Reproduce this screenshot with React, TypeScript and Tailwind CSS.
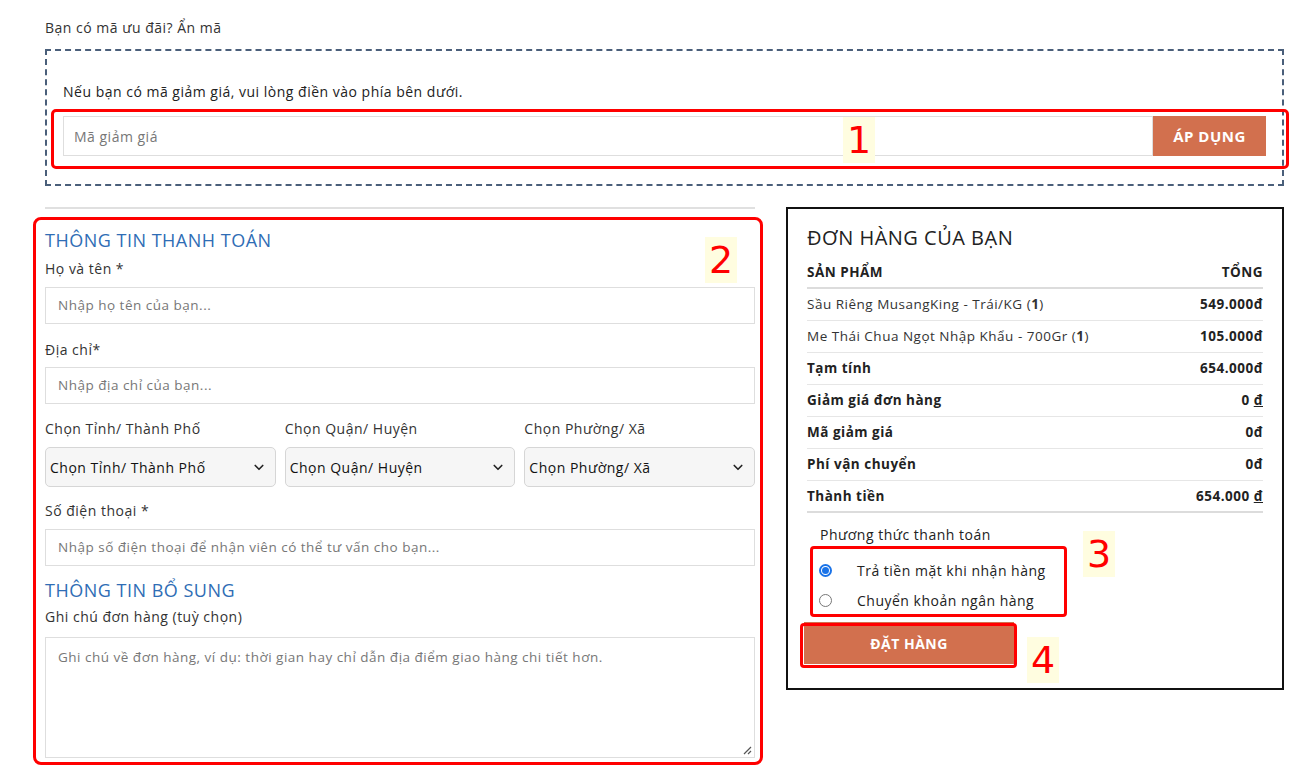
import React from "react";

const font = { fontFamily: '"Open Sans", "Noto Sans", sans-serif', letterSpacing: "0.5px" };

function Chevron() {
  return (
    <svg width="12" height="12" viewBox="0 0 16 16" className="shrink-0">
      <path d="M3 6l5 5 5-5" fill="none" stroke="#222" strokeWidth="2.2" strokeLinecap="round" strokeLinejoin="round" />
    </svg>
  );
}

function Select({ label }: { label: string }) {
  return (
    <div className="flex flex-col">
      <div className="text-[14px] text-[#333] h-[20px] leading-[20px]">{label}</div>
      <div className="mt-[8px] h-[40px] rounded-[5px] border border-[#d6d6d6] bg-[#f6f6f6] flex items-center justify-between pl-[4px] pr-[10px] text-[14px] text-[#111]">
        <span>{label}</span>
        <Chevron />
      </div>
    </div>
  );
}

function Input({ placeholder }: { placeholder: string }) {
  return (
    <div className="h-[37px] border border-[#dedede] flex items-center px-[12px] text-[13.5px] text-[#777]">{placeholder}</div>
  );
}

function Num({ n, cls }: { n: string; cls: string }) {
  return (
    <div className={"absolute bg-[#fffde0] text-[#ff0000] text-[38px] leading-[46px] px-[4px] " + cls} style={{ fontFamily: '"DejaVu Sans", sans-serif', letterSpacing: 0 }}>
      {n}
    </div>
  );
}

function Row({ l, r, bold }: { l: React.ReactNode; r: React.ReactNode; bold?: boolean }) {
  return (
    <div className="h-[32px] flex items-center justify-between border-b border-[#e6e6e6] text-[13.5px]">
      <span className={bold ? "font-bold text-[#222]" : "text-[#333]"}>{l}</span>
      <span className="font-bold text-[#222]">{r}</span>
    </div>
  );
}

export default function App() {
  return (
    <div className="w-[1299px] h-[776px] bg-white relative overflow-hidden text-[#333]" style={font}>
      <div className="pl-[45px] pr-[15px] pt-[18px]">
        <div className="text-[14px] leading-[20px] text-[#333]">Bạn có mã ưu đãi? Ẩn mã</div>
        {/* coupon dashed box */}
        <div className="mt-[11px] border-2 border-dashed border-[#4a5f7a] h-[137px] px-[16px] pt-[31px] relative">
          <div className="text-[14px] leading-[20px] text-[#222]">Nếu bạn có mã giảm giá, vui lòng điền vào phía bên dưới.</div>
          <div className="mt-[14px] flex h-[40px]">
            <div className="flex-1 border border-[#dedede] flex items-center px-[10px] text-[14px] text-[#777]">Mã giảm giá</div>
            <div className="w-[113px] bg-[#d2704e] text-white font-bold text-[15px] flex items-center justify-center">ÁP DỤNG</div>
          </div>
          <div className="absolute left-[4px] top-[58px] w-[1238px] h-[60px] border-[3px] border-[#ff0000] rounded-[5px]" />
          <Num n="1" cls="left-[796px] top-[66px]" />
        </div>

        <div className="mt-[21px] flex gap-[31px]">
          {/* left column */}
          <div className="w-[710px] relative">
            <div className="h-[2px] bg-[#e0e0e0]" />
            <div className="pt-[19px]">
              <div className="text-[18px] leading-[24px] text-[#2f6db5]">THÔNG TIN THANH TOÁN</div>
              <div className="mt-[7px] text-[14px] leading-[20px]">Họ và tên *</div>
              <div className="mt-[8px]"><Input placeholder="Nhập họ tên của bạn..." /></div>
              <div className="mt-[16px] text-[14px] leading-[20px]">Địa chỉ*</div>
              <div className="mt-[7px]"><Input placeholder="Nhập địa chỉ của bạn..." /></div>
              <div className="mt-[15px] grid grid-cols-3 gap-[9px]">
                <Select label="Chọn Tỉnh/ Thành Phố" />
                <Select label="Chọn Quận/ Huyện" />
                <Select label="Chọn Phường/ Xã" />
              </div>
              <div className="mt-[14px] text-[14px] leading-[20px]">Số điện thoại *</div>
              <div className="mt-[8px]"><Input placeholder="Nhập số điện thoại để nhận viên có thể tư vấn cho bạn..." /></div>
              <div className="mt-[12px] text-[18px] leading-[24px] text-[#2f6db5]">THÔNG TIN BỔ SUNG</div>
              <div className="mt-[5px] text-[14px] leading-[20px]">Ghi chú đơn hàng (tuỳ chọn)</div>
              <div className="mt-[10px] h-[121px] border border-[#dedede] px-[12px] pt-[9px] text-[13.5px] text-[#777] relative">
                Ghi chú về đơn hàng, ví dụ: thời gian hay chỉ dẫn địa điểm giao hàng chi tiết hơn.
                <svg className="absolute right-[2px] bottom-[2px]" width="10" height="10" viewBox="0 0 10 10">
                  <path d="M9 2L2 9M9 6L6 9" stroke="#555" strokeWidth="1.2" />
                </svg>
              </div>
            </div>
            <div className="absolute left-[-12px] top-[10px] w-[730px] h-[548px] border-[3px] border-[#ff0000] rounded-[8px]" />
            <Num n="2" cls="left-[660px] top-[30px]" />
          </div>

          {/* right column */}
          <div className="w-[498px] h-[483px] border-2 border-[#111] px-[19px] pt-[15px] relative">
            <div className="text-[20px] leading-[28px] text-[#222]">ĐƠN HÀNG CỦA BẠN</div>
            <div className="mt-[6px] h-[31px] flex items-center justify-between border-b-2 border-[#dcdcdc] text-[13.5px] font-bold text-[#222]">
              <span>SẢN PHẨM</span>
              <span>TỔNG</span>
            </div>
            <Row l={<>Sầu Riêng MusangKing - Trái/KG (<b>1</b>)</>} r="549.000đ" />
            <Row l={<>Me Thái Chua Ngọt Nhập Khẩu - 700Gr (<b>1</b>)</>} r="105.000đ" />
            <Row l="Tạm tính" r="654.000đ" bold />
            <Row l="Giảm giá đơn hàng" r={<>0 <u>đ</u></>} bold />
            <Row l="Mã giảm giá" r="0đ" bold />
            <Row l="Phí vận chuyển" r="0đ" bold />
            <div className="h-[32px] flex items-center justify-between border-b-2 border-[#dcdcdc] text-[13.5px] font-bold text-[#222]">
              <span>Thành tiền</span>
              <span>654.000 <u>đ</u></span>
            </div>
            <div className="pl-[13px] pt-[12px] text-[14px] leading-[20px] text-[#222]">Phương thức thanh toán</div>
            <div className="mt-[15px] ml-[12px] w-[250px] flex flex-col gap-[10px] text-[14px] text-[#222]">
              <div className="flex items-center h-[20px]">
                <span className="w-[13px] h-[13px] rounded-full border-2 border-[#1a73e8] flex items-center justify-center">
                  <span className="w-[7px] h-[7px] rounded-full bg-[#1a73e8]" />
                </span>
                <span className="ml-[25px]">Trả tiền mặt khi nhận hàng</span>
              </div>
              <div className="flex items-center h-[20px]">
                <span className="w-[13px] h-[13px] rounded-full border border-[#777]" />
                <span className="ml-[25px]">Chuyển khoản ngân hàng</span>
              </div>
            </div>
            <div className="absolute left-[22px] top-[337px] w-[257px] h-[71px] border-[3px] border-[#ff0000] rounded-[4px]" />
            <Num n="3" cls="left-[295px] top-[322px]" />
            <div className="mt-[12px] ml-[-3px] w-[210px] h-[42px] bg-[#d2704e] text-white font-bold text-[14px] flex items-center justify-center">ĐẶT HÀNG</div>
            <div className="absolute left-[12px] top-[414px] w-[217px] h-[45px] border-[3px] border-[#ff0000] rounded-[4px]" />
            <Num n="4" cls="left-[239px] top-[428px]" />
          </div>
        </div>
      </div>
    </div>
  );
}
